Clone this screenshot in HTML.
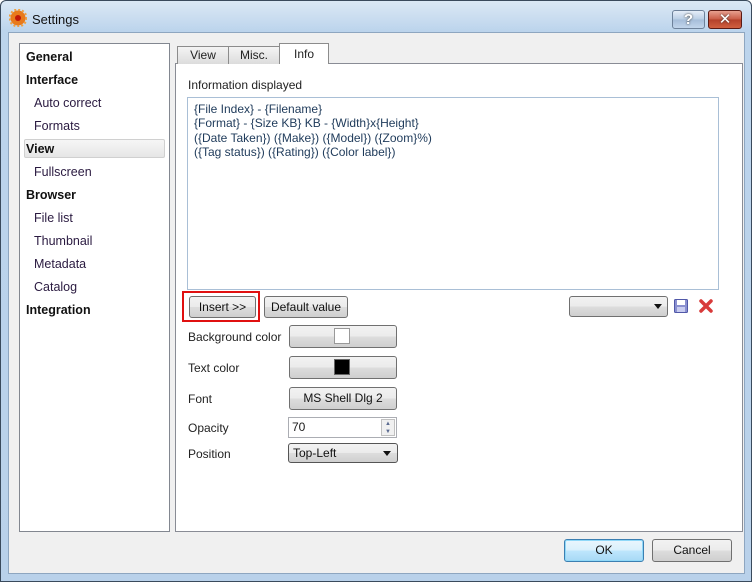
<!DOCTYPE html>
<html><head><style>
*{box-sizing:border-box;margin:0;padding:0}
body{width:752px;height:582px;position:relative;overflow:hidden;font-family:"Liberation Sans","DejaVu Sans",sans-serif;font-size:12px;color:#1a1a1a;background:#fff}
.abs{position:absolute}
.win{left:0;top:0;width:752px;height:582px;border:1px solid #3a4a5c;border-radius:6px 6px 0 0;background:linear-gradient(#dbe8f5 0,#bcd4ec 30px,#b9d1ea 100%)}
.client{left:8px;top:32px;width:737px;height:542px;background:#f0f0f0;border:1px solid #8ea6c0}
.btn{position:absolute;border:1px solid #707070;border-radius:3px;background:linear-gradient(#f2f2f2 0,#ebebeb 50%,#dddddd 51%,#cfcfcf 100%);text-align:center;color:#111;white-space:nowrap}
.side div{position:absolute;left:0;white-space:nowrap}
.b{font-weight:bold;color:#111}
.s{color:#2a1a40;left:8px!important}
.tab{position:absolute;top:46px;height:18px;border:1px solid #8c8c8c;border-bottom:none;background:linear-gradient(#f4f4f4,#dcdcdc);text-align:center;line-height:16px;color:#222}
.lbl{position:absolute;left:188px;color:#222;white-space:nowrap}
</style></head><body>
<div class="abs win"></div>
<svg class="abs" style="left:9px;top:9px" width="18" height="18" viewBox="0 0 18 18"><circle cx="9" cy="9" r="7.5" fill="#e87a1c"/><circle cx="9" cy="9" r="8.5" fill="none" stroke="#f0a040" stroke-width="2" stroke-dasharray="2 2"/><circle cx="9" cy="9" r="3" fill="#c01808"/></svg>
<div class="abs" style="left:32px;top:12px;font-size:13px;color:#111">Settings</div>
<div class="abs" style="left:672px;top:10px;width:33px;height:19px;border:1px solid #6d819a;border-radius:3px;background:linear-gradient(#e6eef8,#b8cde4 50%,#a5bdd9 51%,#c2d6ec);color:#fff;font-weight:bold;font-size:15px;text-align:center;line-height:17px;text-shadow:0 0 2px #333">?</div>
<div class="abs" style="left:708px;top:10px;width:34px;height:19px;border:1px solid #5a1a14;border-radius:3px;background:linear-gradient(#e8a090,#c85a44 50%,#b4402a 51%,#d06040);color:#fff;font-weight:bold;font-size:15px;text-align:center;line-height:17px;text-shadow:0 0 2px #333">✕</div>
<div class="abs client"></div>
<div class="abs" style="left:19px;top:43px;width:151px;height:489px;background:#fff;border:1px solid #828790"></div>
<div class="abs" style="left:24px;top:139px;width:141px;height:19px;border:1px solid #d0d0d0;border-radius:2px;background:linear-gradient(#f6f6f6,#e6e6e6)"></div>
<div class="abs side" style="left:26px;top:46px;line-height:23px;font-size:12.5px">
<div class="b" style="top:0">General</div>
<div class="b" style="top:23px">Interface</div>
<div class="s" style="top:46px">Auto correct</div>
<div class="s" style="top:69px">Formats</div>
<div class="b" style="top:92px">View</div>
<div class="s" style="top:115px">Fullscreen</div>
<div class="b" style="top:138px">Browser</div>
<div class="s" style="top:161px">File list</div>
<div class="s" style="top:184px">Thumbnail</div>
<div class="s" style="top:207px">Metadata</div>
<div class="s" style="top:230px">Catalog</div>
<div class="b" style="top:253px">Integration</div>
</div>
<div class="abs" style="left:175px;top:63px;width:568px;height:469px;background:#fff;border:1px solid #898c95"></div>
<div class="tab" style="left:177px;width:52px">View</div>
<div class="tab" style="left:228px;width:52px">Misc.</div>
<div class="tab" style="left:279px;top:43px;height:21px;width:50px;background:#fff;line-height:20px">Info</div>
<div class="lbl" style="top:78px">Information displayed</div>
<div class="abs" style="left:187px;top:97px;width:532px;height:193px;border:1px solid #a9bfd6;background:#fff;padding:4px 0 0 6px;color:#1e3a5a;line-height:14.3px">{File Index} - {Filename}<br>{Format} - {Size KB} KB - {Width}x{Height}<br>({Date Taken}) ({Make}) ({Model}) ({Zoom}%)<br>({Tag status}) ({Rating}) ({Color label})</div>
<div class="abs" style="left:182px;top:291px;width:78px;height:31px;border:2px solid #e01010"></div>
<div class="btn" style="left:189px;top:296px;width:67px;height:22px;line-height:20px">Insert &gt;&gt;</div>
<div class="btn" style="left:264px;top:296px;width:84px;height:22px;line-height:20px">Default value</div>
<div class="btn" style="left:569px;top:296px;width:99px;height:21px"><span style="position:absolute;right:5px;top:7px;border:4px solid transparent;border-top:5px solid #111"></span></div>
<svg class="abs" style="left:673px;top:298px" width="16" height="16" viewBox="0 0 16 16"><rect x="1.5" y="1.5" width="13" height="13" rx="1" fill="#8a90d0" stroke="#5058a8"/><rect x="4" y="2" width="8" height="5" fill="#fff"/><rect x="4" y="9" width="8" height="5" fill="#c8ccf0"/></svg>
<svg class="abs" style="left:698px;top:298px" width="16" height="16" viewBox="0 0 16 16"><path d="M3 3L13 13M13 3L3 13" stroke="#d83a3a" stroke-width="3.5" stroke-linecap="round"/></svg>
<div class="lbl" style="top:330px">Background color</div>
<div class="btn" style="left:289px;top:325px;width:108px;height:23px"><span style="position:absolute;left:44px;top:2px;width:16px;height:16px;background:#fff;border:1px solid #999"></span></div>
<div class="lbl" style="top:361px">Text color</div>
<div class="btn" style="left:289px;top:356px;width:108px;height:23px"><span style="position:absolute;left:44px;top:2px;width:16px;height:16px;background:#000;border:1px solid #666"></span></div>
<div class="lbl" style="top:392px">Font</div>
<div class="btn" style="left:289px;top:387px;width:108px;height:23px;line-height:21px">MS Shell Dlg 2</div>
<div class="lbl" style="top:421px">Opacity</div>
<div class="abs" style="left:288px;top:417px;width:109px;height:21px;border:1px solid #abadb3;background:#fff;padding:2px 0 0 3px">70<span style="position:absolute;right:1px;top:1px;width:14px;height:17px;border:1px solid #c0c0c0;background:#f0f0f0;font-size:6px;line-height:8px;text-align:center;color:#5a6a90">▲<br>▼</span></div>
<div class="lbl" style="top:447px">Position</div>
<div class="btn" style="left:288px;top:443px;width:110px;height:20px;text-align:left;padding:2px 0 0 4px;border-color:#555">Top-Left<span style="position:absolute;right:6px;top:7px;border:4px solid transparent;border-top:5px solid #111"></span></div>
<div class="btn" style="left:564px;top:539px;width:80px;height:23px;line-height:21px;border-color:#3c7fb1;background:linear-gradient(#eaf6fd,#d9f0fc 50%,#bee6fd 51%,#a7d9f5);box-shadow:inset 0 0 0 1px #8fd8f8">OK</div>
<div class="btn" style="left:652px;top:539px;width:80px;height:23px;line-height:21px">Cancel</div>
</body></html>
